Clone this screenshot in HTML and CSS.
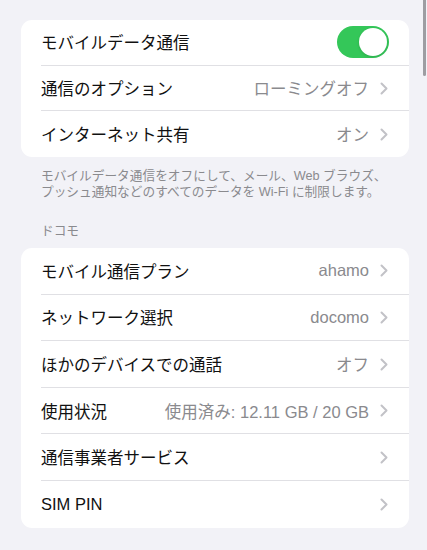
FILE: index.html
```html
<!DOCTYPE html>
<html lang="ja">

<head>
  <meta charset="UTF-8">
  <meta name="viewport" content="width=device-width, initial-scale=1.0">
  <title>モバイル通信</title>
  <link rel="stylesheet" href="styles.css">
</head>

<body>
  <div class="scrollbar"></div>

  <div class="group group-compact">
    <div class="row">
      <span class="label">モバイルデータ通信</span>
      <span class="toggle on"><span class="knob"></span></span>
    </div>
    <div class="row">
      <span class="label">通信のオプション</span>
      <span class="value">ローミングオフ</span>
      <svg class="chevron" viewBox="0 0 8 13"><polyline points="1.5,1.5 6.5,6.5 1.5,11.5" /></svg>
    </div>
    <div class="row">
      <span class="label">インターネット共有</span>
      <span class="value">オン</span>
      <svg class="chevron" viewBox="0 0 8 13"><polyline points="1.5,1.5 6.5,6.5 1.5,11.5" /></svg>
    </div>
  </div>

  <p class="footer">モバイルデータ通信をオフにして、メール、Web ブラウズ、<br>プッシュ通知などのすべてのデータを Wi-Fi に制限します。</p>

  <h3 class="section-title">ドコモ</h3>

  <div class="group">
    <div class="row">
      <span class="label">モバイル通信プラン</span>
      <span class="value">ahamo</span>
      <svg class="chevron" viewBox="0 0 8 13"><polyline points="1.5,1.5 6.5,6.5 1.5,11.5" /></svg>
    </div>
    <div class="row">
      <span class="label">ネットワーク選択</span>
      <span class="value">docomo</span>
      <svg class="chevron" viewBox="0 0 8 13"><polyline points="1.5,1.5 6.5,6.5 1.5,11.5" /></svg>
    </div>
    <div class="row">
      <span class="label">ほかのデバイスでの通話</span>
      <span class="value">オフ</span>
      <svg class="chevron" viewBox="0 0 8 13"><polyline points="1.5,1.5 6.5,6.5 1.5,11.5" /></svg>
    </div>
    <div class="row">
      <span class="label">使用状況</span>
      <span class="value">使用済み: 12.11 GB / 20 GB</span>
      <svg class="chevron" viewBox="0 0 8 13"><polyline points="1.5,1.5 6.5,6.5 1.5,11.5" /></svg>
    </div>
    <div class="row">
      <span class="label">通信事業者サービス</span>
      <svg class="chevron" viewBox="0 0 8 13"><polyline points="1.5,1.5 6.5,6.5 1.5,11.5" /></svg>
    </div>
    <div class="row">
      <span class="label">SIM PIN</span>
      <svg class="chevron" viewBox="0 0 8 13"><polyline points="1.5,1.5 6.5,6.5 1.5,11.5" /></svg>
    </div>
  </div>
</body>

</html>
```

FILE: styles.css
```css
body {
  margin: 0;
  padding: 20px 0 0;
  background-color: #f2f2f7;
  font-family: "Liberation Sans", "Noto Sans CJK JP", sans-serif;
  color: #111;
  position: relative;
  min-height: 550px;
  box-sizing: border-box;
}

.scrollbar {
  position: absolute;
  top: 0;
  right: 1px;
  width: 3px;
  height: 76px;
  border-radius: 0 0 2px 2px;
  background-color: #9d9da2;
}

.group {
  margin: 0 18px 0 21px;
  background-color: #fff;
  border-radius: 11px;
  overflow: hidden;
}

.row {
  display: flex;
  align-items: center;
  height: 46.6px;
  margin-left: 20px;
  padding-right: 21px;
  border-bottom: 1px solid #e0e0e4;
  box-sizing: border-box;
  font-size: 16.5px;
}

.group-compact .row {
  height: 45.7px;
}

.row:last-child {
  border-bottom: none;
}

.label {
  flex: 1;
  white-space: nowrap;
}

.value {
  color: #8a8a8e;
  margin-right: 11px;
  white-space: nowrap;
}

.chevron {
  width: 8px;
  height: 13px;
  fill: none;
  stroke: #c2c2c7;
  stroke-width: 2;
  stroke-linecap: round;
  stroke-linejoin: round;
}

.toggle {
  display: flex;
  align-items: center;
  width: 52px;
  height: 32px;
  margin-right: -1px;
  padding: 2px;
  box-sizing: border-box;
  border-radius: 16px;
  background-color: #e5e5ea;
}

.toggle.on {
  justify-content: flex-end;
  background-color: #34c759;
}

.knob {
  width: 28px;
  height: 28px;
  border-radius: 50%;
  background-color: #fff;
  box-shadow: 0 1px 3px rgba(0, 0, 0, 0.15);
}

.footer {
  margin: 11px 20px 0 41px;
  font-size: 12.7px;
  line-height: 16px;
  color: #8a8a8e;
  white-space: nowrap;
}

.section-title {
  margin: 23px 0 9px 41px;
  font-size: 12.7px;
  line-height: 16px;
  font-weight: normal;
  color: #8a8a8e;
}
```
